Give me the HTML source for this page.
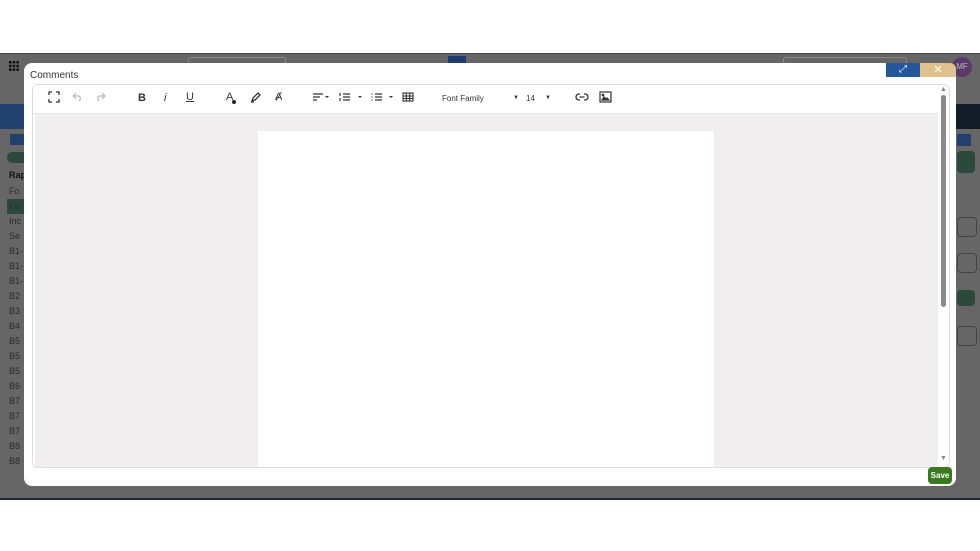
<!DOCTYPE html>
<html><head><style>
body{margin:0;width:980px;height:551px;position:relative;background:#fff;font-family:"Liberation Sans",sans-serif;overflow:hidden}
.ov{position:absolute;left:0;top:53px;width:980px;height:444px;background:#666;border-top:1px solid #444;border-bottom:2px solid #1c2a3a}
.side{position:absolute;left:9px;font-size:9px;color:#2a2a2a}
.a{position:absolute}
.dlg{position:absolute;left:24px;top:63px;width:932px;height:423px;background:#fff;border-radius:8px}
.ed{position:absolute;left:32px;top:84px;width:916px;height:382px;border:1px solid #ddd;border-radius:6px;background:#fff;overflow:hidden}
.tb{position:absolute;left:0;top:0;width:905px;height:28px;border-bottom:1px solid #e3e3e3}
.ct{position:absolute;left:2px;top:29px;width:903px;height:360px;background:#f1eeef}
.pg{position:absolute;left:223px;top:17px;width:456px;height:360px;background:#fff}
.ic{position:absolute;top:91px}
.t{position:absolute;font-size:8px;color:#333;top:94px}
</style></head><body>
<div class="ov">
 <svg class="a" style="left:9px;top:7px" width="10" height="10" viewBox="0 0 10 10" fill="#111"><rect x="0" y="0" width="2.5" height="2.5"/><rect x="3.7" y="0" width="2.5" height="2.5"/><rect x="7.4" y="0" width="2.5" height="2.5"/><rect x="0" y="3.7" width="2.5" height="2.5"/><rect x="3.7" y="3.7" width="2.5" height="2.5"/><rect x="7.4" y="3.7" width="2.5" height="2.5"/><rect x="0" y="7.4" width="2.5" height="2.5"/><rect x="3.7" y="7.4" width="2.5" height="2.5"/><rect x="7.4" y="7.4" width="2.5" height="2.5"/></svg>
 <div class="a" style="left:188px;top:3px;width:96px;height:14px;border:1px solid #888;border-radius:3px"></div>
 <div class="a" style="left:448px;top:2px;width:18px;height:12px;background:#1d3d6e"></div>
 <div class="a" style="left:783px;top:3px;width:122px;height:14px;border:1px solid #888;border-radius:3px"></div>
 <div class="a" style="left:952px;top:3px;width:20px;height:20px;border-radius:50%;background:#5a3a6b;color:#bbb;font-size:8px;line-height:20px;text-align:center">MF</div>
 <div class="a" style="left:0;top:50px;width:24px;height:25px;background:#22406e"></div>
 <div class="a" style="left:956px;top:50px;width:24px;height:25px;background:#141c28"></div>
 <div class="a" style="left:10px;top:80px;width:14px;height:11px;background:#22406e"></div>
 <div class="a" style="left:7px;top:98px;width:17px;height:11px;background:#2b4a3c;border-radius:6px 0 0 6px"></div>
 <div class="a" style="left:7px;top:145px;width:17px;height:15px;background:#2b4a3c"></div>
 <div class="a" style="left:957px;top:80px;width:14px;height:12px;background:#22406e"></div>
 <div class="a" style="left:957px;top:97px;width:18px;height:22px;background:#2b4a3c;border-radius:4px"></div>
 <div class="a" style="left:957px;top:163px;width:18px;height:18px;border:1px solid #444;border-radius:4px"></div>
 <div class="a" style="left:957px;top:199px;width:18px;height:18px;border:1px solid #444;border-radius:4px"></div>
 <div class="a" style="left:957px;top:236px;width:18px;height:16px;background:#2b4a3c;border-radius:4px"></div>
 <div class="a" style="left:957px;top:272px;width:18px;height:18px;border:1px solid #444;border-radius:4px"></div>
 <div class="side" style="top:116px;font-weight:bold;color:#111">Rap</div>
 <div class="side" style="top:132px">Fo</div><div class="side" style="top:147px">Fo</div>
 <div class="side" style="top:162px">Inc</div><div class="side" style="top:177px">Se</div>
 <div class="side" style="top:192px">B1-</div><div class="side" style="top:207px">B1-</div><div class="side" style="top:222px">B1-</div>
 <div class="side" style="top:237px">B2</div><div class="side" style="top:252px">B3</div><div class="side" style="top:267px">B4</div>
 <div class="side" style="top:282px">B5</div><div class="side" style="top:297px">B5</div><div class="side" style="top:312px">B5</div>
 <div class="side" style="top:327px">B6</div><div class="side" style="top:342px">B7</div><div class="side" style="top:357px">B7</div>
 <div class="side" style="top:372px">B7</div><div class="side" style="top:387px">B8</div><div class="side" style="top:402px">B8</div>
</div>
<div class="dlg"></div>
<div class="a" style="left:886px;top:63px;width:34px;height:14px;background:#24589a;color:#fff;font-size:10px;text-align:center;line-height:14px">⤢</div>
<div class="a" style="left:920px;top:63px;width:36px;height:14px;background:#e0c28c;color:#fff;font-size:11px;text-align:center;line-height:14px;border-radius:0 6px 0 0">✕</div>
<div class="a" style="left:30px;top:70px;font-size:10px;color:#333">Comments</div>
<div class="ed"><div class="tb"></div><div class="ct"><div class="pg"></div></div>
 <div class="a" style="left:908px;top:10px;width:5px;height:212px;background:#8a8a8a;border-radius:3px"></div>
 <div class="a" style="left:907px;top:1px;font-size:7px;color:#888">▲</div>
 <div class="a" style="left:907px;top:370px;font-size:7px;color:#888">▼</div>
</div>
<svg class="ic" style="left:48px" width="12" height="12" viewBox="0 0 12 12" fill="none" stroke="#333" stroke-width="1.3"><path d="M1 4V1h3M8 1h3v3M11 8v3H8M4 11H1V8"/></svg>
<svg class="ic" style="left:71px" width="12" height="12" viewBox="0 0 12 12" fill="none" stroke="#bbb" stroke-width="1.2"><path d="M2 5h6a3 3 0 0 1 0 5M2 5l3-3M2 5l3 3"/></svg>
<svg class="ic" style="left:95px" width="12" height="12" viewBox="0 0 12 12" fill="none" stroke="#bbb" stroke-width="1.2"><path d="M10 5H4a3 3 0 0 0 0 5M10 5L7 2M10 5L7 8"/></svg>
<div class="t" style="left:138px;font-size:11px;top:92px;font-weight:bold">B</div>
<div class="t" style="left:164px;font-size:11px;top:92px;font-style:italic">i</div>
<div class="t" style="left:186px;font-size:11px;top:91px;text-decoration:underline">U</div>
<div class="t" style="left:226px;font-size:11px;top:91px">A</div><div class="a" style="left:232px;top:100px;width:4px;height:4px;border-radius:50%;background:#222"></div>
<svg class="ic" style="left:250px" width="12" height="12" viewBox="0 0 12 12" fill="none" stroke="#333" stroke-width="1.3"><path d="M2 10l1-3 5-5 2 2-5 5zM1 11h3"/></svg>
<div class="t" style="left:275px;font-size:11px;top:91px">Ⱥ</div>
<svg class="ic" style="left:312px" width="20" height="12" viewBox="0 0 20 12" fill="none" stroke="#333" stroke-width="1.2"><path d="M1 3h10M1 6h7M1 9h4"/><path d="M13 5h4l-2 2z" fill="#333" stroke="none"/></svg>
<svg class="ic" style="left:338px" width="26" height="12" viewBox="0 0 26 12" fill="none" stroke="#333" stroke-width="1.2"><path d="M5 3h7M5 6h7M5 9h7M2 2v3M2 7v3"/><path d="M20 5h4l-2 2z" fill="#333" stroke="none"/></svg>
<svg class="ic" style="left:370px" width="26" height="12" viewBox="0 0 26 12" fill="none" stroke="#333" stroke-width="1.2"><path d="M5 3h7M5 6h7M5 9h7M1.5 3h1M1.5 6h1M1.5 9h1"/><path d="M19 5h4l-2 2z" fill="#333" stroke="none"/></svg>
<svg class="ic" style="left:402px" width="12" height="12" viewBox="0 0 12 12" fill="none" stroke="#333" stroke-width="1.1"><rect x="1" y="2" width="10" height="8"/><path d="M1 5h10M1 7.5h10M4.3 2v8M7.6 2v8"/></svg>
<div class="t" style="left:442px">Font Family</div>
<div class="t" style="left:513px;font-size:6px;top:95px">▼</div>
<div class="t" style="left:526px">14</div>
<div class="t" style="left:545px;font-size:6px;top:95px">▼</div>
<svg class="ic" style="left:575px" width="14" height="12" viewBox="0 0 14 12" fill="none" stroke="#333" stroke-width="1.3"><path d="M5 3H4a3 3 0 0 0 0 6h1M9 3h1a3 3 0 0 1 0 6H9M4.5 6h5"/></svg>
<svg class="ic" style="left:599px" width="13" height="12" viewBox="0 0 13 12" fill="none" stroke="#333" stroke-width="1.2"><rect x="1" y="1" width="11" height="10"/><path d="M3 9l2-3 2 2 1-1 2 2z" fill="#333"/><circle cx="4" cy="4" r=".8" fill="#333"/></svg>
<div class="a" style="left:928px;top:467px;width:24px;height:17px;background:#3a7a1e;border-radius:4px;color:#fff;font-size:8px;font-weight:bold;text-align:center;line-height:17px">Save</div>
</body></html>
